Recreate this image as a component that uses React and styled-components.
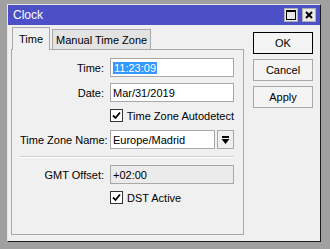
import React from "react";
import styled, { createGlobalStyle } from "styled-components";

const Global = createGlobalStyle`
  html, body { margin: 0; padding: 0; background: #a0a0a0; }
  body { font-family: "Liberation Sans", Arial, sans-serif; font-size: 11px; color: #000; }
`;

const Screen = styled.div`
  width: 330px;
  height: 249px;
  padding: 4px 0 0 7px;
  box-sizing: border-box;
`;

const Window = styled.div`
  width: 314px;
  height: 238px;
  box-sizing: border-box;
  background: #f0f0f0;
  border: 1px solid;
  border-color: #e3e3e3 #1a1a1a #1a1a1a #e3e3e3;
  display: flex;
  flex-direction: column;
`;

const TitleBar = styled.div`
  height: 20px;
  background: #4d4fc6;
  color: #fff;
  display: flex;
  align-items: center;
  padding: 0 4px 0 5px;
  justify-content: space-between;
`;

const TitleText = styled.span`
  font-size: 12px;
`;

const TitleButtons = styled.div`
  display: flex;
  gap: 4px;
`;

const TitleButton = styled.div`
  width: 12px;
  height: 12px;
  background: #e8e8e8;
  border: 1px solid #b0b0b0;
  display: flex;
  align-items: center;
  justify-content: center;
`;

const Body = styled.div`
  flex: 1;
  display: flex;
  padding: 2px 0 0 3px;
`;

const LeftCol = styled.div`
  width: 233px;
  display: flex;
  flex-direction: column;
`;

const Tabs = styled.div`
  display: flex;
  align-items: flex-end;
  height: 22px;
  padding-left: 1px;
`;

const Tab = styled.div`
  box-sizing: border-box;
  height: ${(p) => (p.$active ? "23px" : "20px")};
  padding: 0 ${(p) => (p.$active ? "6px" : "3px")};
  display: flex;
  align-items: center;
  background: ${(p) => (p.$active ? "#f0f0f0" : "#e3e3e3")};
  border: 1px solid #a8a8a8;
  border-bottom: none;
  margin-bottom: ${(p) => (p.$active ? "-1px" : "0")};
  margin-left: ${(p) => (p.$active ? "0" : "2px")};
  position: relative;
  z-index: ${(p) => (p.$active ? 1 : 0)};
  padding-top: ${(p) => (p.$active ? "0" : "1px")};
`;

const Panel = styled.div`
  box-sizing: border-box;
  height: 186px;
  border: 1px solid #a8a8a8;
  padding: 8px 9px 0 8px;
  display: flex;
  flex-direction: column;
`;

const Row = styled.div`
  display: flex;
  align-items: center;
  margin-top: ${(p) => p.$mt || 0}px;
`;

const Label = styled.div`
  width: 84px;
  text-align: right;
  margin-right: 6px;
  white-space: nowrap;
`;

const Field = styled.div`
  box-sizing: border-box;
  width: ${(p) => p.$w || 124}px;
  height: 19px;
  border: 1px solid #a8a8a8;
  background: ${(p) => (p.$readonly ? "#ebebeb" : "#fff")};
  display: flex;
  align-items: center;
  padding-left: 2px;
  white-space: nowrap;
`;

const Selected = styled.span`
  background: #3399ff;
  color: #fff;
  padding: 0 1px;
`;

const DropButton = styled.div`
  box-sizing: border-box;
  width: 17px;
  height: 19px;
  margin-left: 2px;
  border: 1px solid #a8a8a8;
  background: #f0f0f0;
  display: flex;
  align-items: center;
  justify-content: center;
`;

const CheckRow = styled.label`
  display: flex;
  align-items: center;
  height: 13px;
  margin-left: 90px;
  margin-top: ${(p) => p.$mt || 0}px;
  gap: 4px;
  white-space: nowrap;
`;

const CheckBox = styled.div`
  box-sizing: border-box;
  width: 13px;
  height: 13px;
  border: 1px solid #333;
  background: #fff;
  display: flex;
  align-items: center;
  justify-content: center;
`;

const Separator = styled.div`
  height: 1px;
  background: #d0d0d0;
  margin: 7px 0 0 0;
  border-bottom: 1px solid #fff;
`;

const RightCol = styled.div`
  display: flex;
  flex-direction: column;
  padding: 5px 0 0 9px;
  gap: 5px;
`;

const Button = styled.div`
  box-sizing: border-box;
  width: 60px;
  height: 22px;
  border: 1px solid ${(p) => (p.$default ? "#000" : "#a8a8a8")};
  background: #f4f4f4;
  display: flex;
  align-items: center;
  justify-content: center;
`;

const Check = () => (
  <svg width="9" height="9" viewBox="0 0 9 9">
    <path d="M1 4.5 L3.5 7 L8 1.5" stroke="#000" strokeWidth="1.8" fill="none" />
  </svg>
);

export default function App() {
  return (
    <>
      <Global />
      <Screen>
        <Window>
          <TitleBar>
            <TitleText>Clock</TitleText>
            <TitleButtons>
              <TitleButton>
                <svg width="10" height="10" viewBox="0 0 10 10">
                  <rect x="0.5" y="0.5" width="9" height="9" fill="none" stroke="#000" />
                  <rect x="0.5" y="0.5" width="9" height="1.5" fill="#000" />
                </svg>
              </TitleButton>
              <TitleButton>
                <svg width="8" height="8" viewBox="0 0 8 8">
                  <path d="M1 1 L7 7 M7 1 L1 7" stroke="#000" strokeWidth="2" />
                </svg>
              </TitleButton>
            </TitleButtons>
          </TitleBar>
          <Body>
            <LeftCol>
              <Tabs>
                <Tab $active>Time</Tab>
                <Tab>Manual Time Zone</Tab>
              </Tabs>
              <Panel>
                <Row>
                  <Label>Time:</Label>
                  <Field>
                    <Selected>11:23:09</Selected>
                  </Field>
                </Row>
                <Row $mt={6}>
                  <Label>Date:</Label>
                  <Field>Mar/31/2019</Field>
                </Row>
                <CheckRow $mt={7}>
                  <CheckBox>
                    <Check />
                  </CheckBox>
                  <span>Time Zone Autodetect</span>
                </CheckRow>
                <Row $mt={8}>
                  <Label>Time Zone Name:</Label>
                  <Field $w={105}>Europe/Madrid</Field>
                  <DropButton>
                    <svg width="9" height="10" viewBox="0 0 9 10">
                      <rect x="1" y="1" width="7" height="2" fill="#000" />
                      <path d="M0.5 4 L8.5 4 L4.5 9 Z" fill="#000" />
                    </svg>
                  </DropButton>
                </Row>
                <Separator />
                <Row $mt={7}>
                  <Label>GMT Offset:</Label>
                  <Field $readonly>+02:00</Field>
                </Row>
                <CheckRow $mt={7}>
                  <CheckBox>
                    <Check />
                  </CheckBox>
                  <span>DST Active</span>
                </CheckRow>
              </Panel>
            </LeftCol>
            <RightCol>
              <Button $default>OK</Button>
              <Button>Cancel</Button>
              <Button>Apply</Button>
            </RightCol>
          </Body>
        </Window>
      </Screen>
    </>
  );
}
